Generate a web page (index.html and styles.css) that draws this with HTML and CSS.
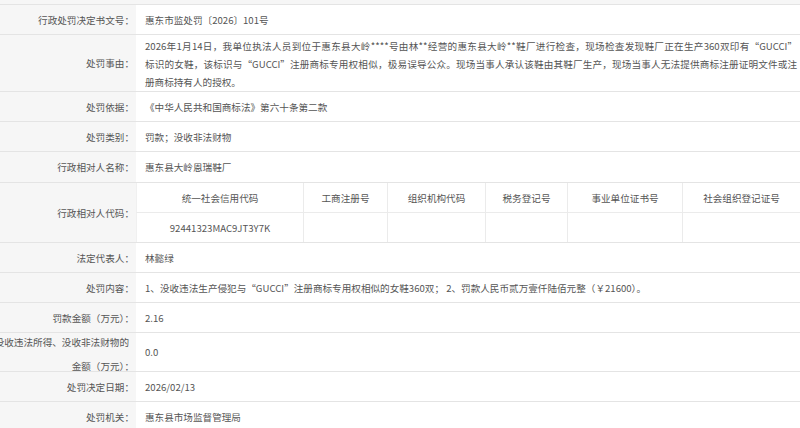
FILE: index.html
```html
<!DOCTYPE html>
<html lang="zh-CN">
<head>
<meta charset="utf-8">
<title>行政处罚信息</title>
<link rel="stylesheet" href="styles.css">
</head>
<body>
<div class="sheet">
  <div class="row">
    <div class="lbl">行政处罚决定书文号：</div>
    <div class="val">惠东市监处罚〔2026〕101号</div>
  </div>
  <div class="row row-tall">
    <div class="lbl">处罚事由：</div>
    <div class="val val-multi">
      <span class="ln just">2026年1月14日，我单位执法人员到位于惠东县大岭****号由林**经营的惠东县大岭**鞋厂进行检查，现场检查发现鞋厂正在生产360双印有“GUCCI”</span>
      <span class="ln just">标识的女鞋，该标识与“GUCCI”注册商标专用权相似，极易误导公众。现场当事人承认该鞋由其鞋厂生产，现场当事人无法提供商标注册证明文件或注</span>
      <span class="ln">册商标持有人的授权。</span>
    </div>
  </div>
  <div class="row">
    <div class="lbl">处罚依据：</div>
    <div class="val">《中华人民共和国商标法》第六十条第二款</div>
  </div>
  <div class="row">
    <div class="lbl">处罚类别：</div>
    <div class="val">罚款；没收非法财物</div>
  </div>
  <div class="row row-31">
    <div class="lbl">行政相对人名称：</div>
    <div class="val">惠东县大岭恩瑞鞋厂</div>
  </div>
  <div class="row">
    <div class="lbl">行政相对人代码：</div>
    <div class="val val-table">
      <div class="codes">
        <div class="cell head">统一社会信用代码</div>
        <div class="cell head">工商注册号</div>
        <div class="cell head">组织机构代码</div>
        <div class="cell head">税务登记号</div>
        <div class="cell head">事业单位证书号</div>
        <div class="cell head">社会组织登记证号</div>
        <div class="cell">92441323MAC9JT3Y7K</div>
        <div class="cell"></div>
        <div class="cell"></div>
        <div class="cell"></div>
        <div class="cell"></div>
        <div class="cell"></div>
      </div>
    </div>
  </div>
  <div class="row">
    <div class="lbl">法定代表人：</div>
    <div class="val">林懿绿</div>
  </div>
  <div class="row">
    <div class="lbl">处罚内容：</div>
    <div class="val">1、没收违法生产侵犯与“GUCCI”注册商标专用权相似的女鞋360双； 2、罚款人民币贰万壹仟陆佰元整（￥21600）。</div>
  </div>
  <div class="row">
    <div class="lbl">罚款金额（万元）：</div>
    <div class="val">2.16</div>
  </div>
  <div class="row row-two">
    <div class="lbl lbl-two"><span class="wide"><span class="l1">没收违法所得、没收非法财物的</span>金额（万元）：</span></div>
    <div class="val">0.0</div>
  </div>
  <div class="row">
    <div class="lbl">处罚决定日期：</div>
    <div class="val">2026/02/13</div>
  </div>
  <div class="row">
    <div class="lbl">处罚机关：</div>
    <div class="val">惠东县市场监督管理局</div>
  </div>
</div>
</body>
</html>
```
FILE: styles.css
```css
html, body {
  margin: 0;
  padding: 0;
}
body {
  background: #f6f6f6;
  font-family: "Noto Sans CJK SC", "Noto Sans", sans-serif;
  font-size: 9.6px;
  color: #555555;
  overflow: hidden;
  width: 800px;
  height: 428px;
}
.sheet {
  padding-top: 4px;
}
.row {
  display: grid;
  grid-template-columns: 136px 1fr;
  border-top: 1px solid #e4e4e4;
  min-height: 29px;
}
.row-tall { min-height: 56px; }
.row-31 { min-height: 30px; }
.row-two { min-height: 38px; }
.lbl {
  background: #f6f6f6;
  display: flex;
  align-items: center;
  justify-content: flex-end;
  text-align: right;
  padding-right: 2px;
}
.lbl-two {
  height: 38px;
  align-items: flex-start;
  line-height: 24px;
}
.wide {
  display: block;
  margin-top: -3px;
  margin-left: -20px;
  white-space: nowrap;
  text-align: right;
}
.l1 {
  display: block;
  margin-right: 5px;
}
.val {
  background: #fff;
  display: flex;
  align-items: center;
  padding-left: 9px;
  white-space: nowrap;
}
.val-multi {
  flex-direction: column;
  align-items: stretch;
  justify-content: center;
  white-space: normal;
  padding-right: 3px;
  padding-top: 1px;
  line-height: 18px;
}
.ln {
  display: block;
  white-space: nowrap;
}
.just {
  text-align: justify;
  text-align-last: justify;
}
.val-table {
  padding-left: 0;
  display: block;
}
.codes {
  display: grid;
  grid-template-columns: 167px 84px 98px 82px 115px 1fr;
  grid-template-rows: 30px 29px;
}
.cell {
  display: flex;
  align-items: center;
  justify-content: center;
  border-left: 1px solid #ebebeb;
}
.cell:nth-child(6n+1) {
  border-left: 1px solid #f0f0f0;
}
.head {
  border-bottom: 1px solid #ebebeb;
}
```
